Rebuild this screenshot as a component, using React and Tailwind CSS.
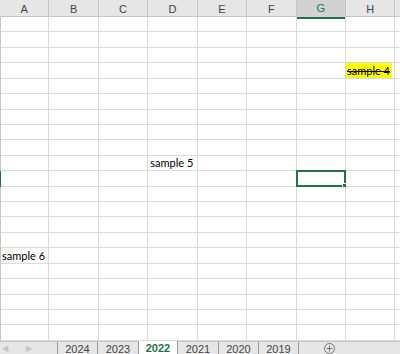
import { Plus } from 'lucide-react'

const cols = ['A', 'B', 'C', 'D', 'E', 'F', 'G', 'H', '']
const rows = Array.from({ length: 21 }, (_, i) => i + 1)
const tabs = [
  { name: '2024', w: 'w-[40px]' },
  { name: '2023', w: 'w-[41px]' },
  { name: '2022', w: 'w-[39px]' },
  { name: '2021', w: 'w-[41px]' },
  { name: '2020', w: 'w-[40px]' },
  { name: '2019', w: 'w-[40px]' },
]

function Cell({ row, col }) {
  const selected = row === 11 && col === 'G'
  let content = null
  if (row === 4 && col === 'H') {
    content = (
      <span className="flex h-full items-center bg-[#ffff00] pl-[1px] pr-[2px] pt-[1px] line-through">sample 4</span>
    )
  } else if (row === 10 && col === 'D') {
    content = <span className="flex h-full items-center pl-[2px] pt-[1px]">sample 5</span>
  } else if (row === 16 && col === 'A') {
    content = <span className="flex h-full items-center pl-[2px] pt-[2px]">sample 6</span>
  }

  return (
    <div className="relative flex border-b border-r border-[#dadada] whitespace-nowrap">
      {content}
      {selected && (
        <div className="absolute -left-[1px] -top-[1px] right-[-1px] bottom-[-1px] border-2 border-[#217346]">
          <div className="absolute -bottom-[3px] -right-[3px] h-[5px] w-[5px] border border-white bg-[#217346]" />
        </div>
      )}
    </div>
  )
}

export default function App() {
  return (
    <div className="flex h-[354px] w-[400px] flex-col overflow-hidden bg-white font-['Lato',sans-serif] text-[11px] text-black">
      <div className="grid h-[17px] shrink-0 grid-cols-[repeat(9,49.43px)] border-b border-[#c6c6c6] bg-[#e6e6e6] font-['Liberation_Sans',sans-serif] text-[11px] text-[#444]">
        {cols.map((c, i) => (
          <div
            key={i}
            className={
              c === 'G'
                ? 'flex items-center justify-center border-b-2 border-r border-b-[#217346] border-r-[#c6c6c6] bg-[#d2d2d2] text-[#217346]'
                : 'flex items-center justify-center border-r border-[#c6c6c6]'
            }
          >
            {c}
          </div>
        ))}
      </div>

      <div className="relative flex-1 border-l border-[#c6c6c6]">
        <div className="absolute -left-[1px] top-[154.3px] z-10 h-[15.43px] w-[1px] bg-[#217346]" />
        <div className="h-full overflow-hidden">
          <div className="-ml-[1px] grid auto-rows-[15.43px] grid-cols-[repeat(9,49.43px)]">
            {rows.map((r) => cols.map((c, i) => <Cell key={i + '-' + r} row={r} col={c} />))}
          </div>
        </div>
      </div>

      <div className="flex h-[15px] shrink-0 items-stretch border-t border-[#c6c6c6] bg-[#e6e6e6] font-['Liberation_Sans',sans-serif] text-[11px] text-[#444]">
        <div className="flex w-[57px] items-center gap-[18px] pl-[2px] text-[8px] text-[#c4c4c4]">
          <span>◀</span>
          <span>▶</span>
        </div>
        <div className="w-[1px] bg-[#9a9a9a]" />
        {tabs.map((t) =>
          t.name === '2022' ? (
            <div
              key={t.name}
              className={`-mt-[1px] flex ${t.w} items-center justify-center border-r border-[#9a9a9a] bg-white font-bold text-[#217346]`}
            >
              {t.name}
            </div>
          ) : (
            <div key={t.name} className={`flex ${t.w} items-center justify-center border-r border-[#9a9a9a]`}>
              {t.name}
            </div>
          )
        )}
        <div className="flex flex-1 items-center pl-[25px]">
          <div className="flex h-[11px] w-[11px] items-center justify-center rounded-full border border-[#777]">
            <Plus size={9} strokeWidth={2} className="text-[#555]" />
          </div>
        </div>
      </div>
    </div>
  )
}
